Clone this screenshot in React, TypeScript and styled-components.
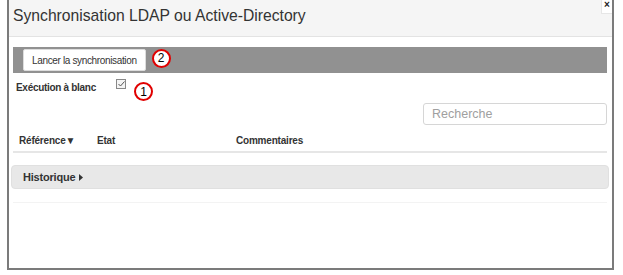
import React from 'react';
import styled, { createGlobalStyle } from 'styled-components';

const GlobalStyle = createGlobalStyle`
  html, body {
    margin: 0;
    padding: 0;
    background: #fff;
    font-family: 'Liberation Sans', Arial, sans-serif;
  }
`

const Page = styled.div`
  width: 623px;
  height: 275px;
  padding: 0 9px 5px 7px;
  box-sizing: border-box;
  display: flex;
`

const Dialog = styled.div`
  flex: 1;
  display: flex;
  flex-direction: column;
  border: 2px solid #7b7b7b;
  border-top: none;
  position: relative;
  background: #fff;
`

const Header = styled.div`
  height: 37px;
  box-sizing: border-box;
  background: #f5f5f5;
  border-bottom: 1px solid #e3e3e3;
  padding: 7px 0 0 4px;
  font-size: 15.7px;
  color: #333;
`

const CloseButton = styled.div`
  position: absolute;
  top: 0;
  right: 0;
  width: 10px;
  height: 13px;
  background: #fff;
  border-left: 1px solid #e6e6e6;
  border-bottom: 1px solid #e6e6e6;
  font-size: 10px;
  font-weight: bold;
  line-height: 10px;
  text-align: center;
  color: #222;
`

const Body = styled.div`
  padding: 10px 5px 0 4px;
  display: flex;
  flex-direction: column;
`

const Toolbar = styled.div`
  height: 26px;
  background: #919191;
  display: flex;
  align-items: center;
  padding-left: 10px;
  gap: 6px;
`

const Button = styled.div`
  height: 22px;
  box-sizing: border-box;
  padding: 0 8px;
  background: #fff;
  border-radius: 2px;
  border: 1px solid #ddd;
  font-size: 10px;
  letter-spacing: -0.35px;
  color: #333;
  display: flex;
  align-items: center;
`

const Marker = styled.div<{ $top?: number }>`
  width: 19px;
  height: 19px;
  box-sizing: border-box;
  border: 2px solid #e00000;
  border-radius: 50%;
  background: #fff;
  font-size: 12px;
  color: #000;
  display: flex;
  align-items: center;
  justify-content: center;
  margin-top: ${p => p.$top ?? 0}px;
`

const OptionRow = styled.div`
  display: flex;
  align-items: flex-start;
  padding: 6px 0 0 3px;
  height: 24px;
`

const OptionLabel = styled.span`
  font-size: 10px;
  font-weight: bold;
  letter-spacing: -0.3px;
  color: #333;
  width: 100px;
  margin-top: 3px;
`

const Check = styled.div`
  width: 8px;
  height: 8px;
  border: 1px solid #888;
  background: #f4f4f4;
  margin-right: 8px;
  display: flex;
  align-items: center;
  justify-content: center;
`

const SearchRow = styled.div`
  display: flex;
  justify-content: flex-end;
`

const SearchInput = styled.div`
  width: 184px;
  height: 22px;
  box-sizing: border-box;
  border: 1px solid #d6d6d6;
  border-radius: 3px;
  padding-left: 8px;
  font-size: 12.5px;
  color: #a0a0a0;
  display: flex;
  align-items: center;
`

const TableHead = styled.div`
  display: grid;
  grid-template-columns: 78px 139px 1fr;
  padding: 10px 0 5px 6px;
  border-bottom: 2px solid #e6e6e6;
  font-size: 10px;
  letter-spacing: -0.2px;
  font-weight: bold;
  color: #333;
`

const Panel = styled.div`
  margin: 12px -2px 0 -2px;
  height: 24px;
  box-sizing: border-box;
  background: #e8e8e8;
  border: 1px solid #e0e0e0;
  border-radius: 4px;
  display: flex;
  align-items: center;
  padding-left: 11px;
  font-size: 11px;
  letter-spacing: -0.2px;
  font-weight: bold;
  color: #333;
  gap: 4px;
`

const Footer = styled.div`
  margin-top: 13px;
  border-top: 1px solid #f3f3f3;
`

export default function App() {
  return (
    <>
      <GlobalStyle />
      <Page>
        <Dialog>
          <Header>Synchronisation LDAP ou Active-Directory</Header>
          <CloseButton>×</CloseButton>
          <Body>
            <Toolbar>
              <Button>Lancer la synchronisation</Button>
              <Marker $top={-4}>2</Marker>
            </Toolbar>
            <OptionRow>
              <OptionLabel>Exécution à blanc</OptionLabel>
              <Check>
                <svg width="7" height="6" viewBox="0 0 7 6">
                  <path d="M0.5 3 L2.5 5 L6.5 0.5" fill="none" stroke="#555" strokeWidth="1" />
                </svg>
              </Check>
              <Marker $top={3}>1</Marker>
            </OptionRow>
            <SearchRow>
              <SearchInput>Recherche</SearchInput>
            </SearchRow>
            <TableHead>
              <span>Référence▼</span>
              <span>Etat</span>
              <span>Commentaires</span>
            </TableHead>
            <Panel>
              <span>Historique</span>
              <svg width="4" height="7" viewBox="0 0 4 7">
                <path d="M0 0 L4 3.5 L0 7 Z" fill="#333" />
              </svg>
            </Panel>
            <Footer />
          </Body>
        </Dialog>
      </Page>
    </>
  )
}
